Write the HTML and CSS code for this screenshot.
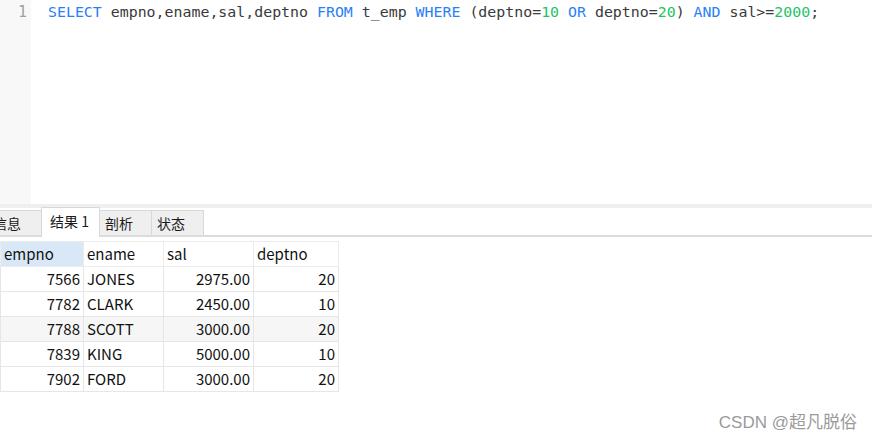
FILE: index.html
```html
<!DOCTYPE html>
<html>
<head>
<meta charset="utf-8">
<link rel="stylesheet" href="styles.css">
</head>
<body>
<div class="editor">
  <div class="gutter"><span class="ln">1</span></div>
  <div class="code"><span class="kw">SELECT</span> empno,ename,sal,deptno <span class="kw">FROM</span> t_emp <span class="kw">WHERE</span> (deptno=<span class="num">10</span> <span class="kw">OR</span> deptno=<span class="num">20</span>) <span class="kw">AND</span> sal&gt;=<span class="num">2000</span>;</div>
</div>
<div class="band"></div>
<div class="tabs">
  <div class="tab first">信息</div>
  <div class="tab active">结果 1</div>
  <div class="tab">剖析</div>
  <div class="tab">状态</div>
</div>
<div class="results">
  <table class="grid">
    <thead>
      <tr><th class="c1 sel">empno</th><th class="c2">ename</th><th class="c3">sal</th><th class="c4">deptno</th></tr>
    </thead>
    <tbody>
      <tr><td class="r">7566</td><td>JONES</td><td class="r">2975.00</td><td class="r">20</td></tr>
      <tr><td class="r">7782</td><td>CLARK</td><td class="r">2450.00</td><td class="r">10</td></tr>
      <tr class="alt"><td class="r">7788</td><td>SCOTT</td><td class="r">3000.00</td><td class="r">20</td></tr>
      <tr><td class="r">7839</td><td>KING</td><td class="r">5000.00</td><td class="r">10</td></tr>
      <tr><td class="r">7902</td><td>FORD</td><td class="r">3000.00</td><td class="r">20</td></tr>
    </tbody>
  </table>
  <div class="watermark">CSDN @超凡脱俗</div>
</div>
</body>
</html>
```
FILE: styles.css
```css
html, body {
  margin: 0;
  padding: 0;
  background: #ffffff;
  width: 872px;
  height: 443px;
  overflow: hidden;
}
.editor {
  display: flex;
  height: 204px;
  background: #ffffff;
}
.gutter {
  width: 31px;
  background: #f8f8f8;
  box-sizing: border-box;
  padding-right: 3px;
  text-align: right;
}
.ln {
  display: block;
  font-family: "DejaVu Sans Mono", monospace;
  font-size: 15px;
  line-height: 24px;
  color: #a0a0a0;
  padding-right: 1px;
}
.code {
  padding-left: 17px;
  font-family: "DejaVu Sans Mono", monospace;
  font-size: 14.9px;
  line-height: 24px;
  color: #3a3a3a;
  white-space: pre;
}
.kw { color: #2b7ff5; }
.num { color: #1cc466; }
.band {
  height: 4px;
  background: #efefef;
}
.tabs {
  display: flex;
  align-items: flex-end;
  height: 27px;
  border-bottom: 2px solid #dcdcdc;
  font-family: "Noto Sans CJK SC", "Noto Sans", sans-serif;
  font-size: 14px;
  color: #1a1a1a;
  background: #ffffff;
}
.tab {
  box-sizing: border-box;
  height: 25px;
  line-height: 24px;
  padding: 0 7px 0 6px;
  background: #efefef;
  border: 1px solid #d8d8d8;
  border-bottom: none;
  margin-left: -1px;
}
.tab.first {
  margin-left: -8px;
  width: 50px;
  padding: 0;
}
.tab.active {
  background: #ffffff;
  line-height: 27px;
  width: 59px;
  padding: 0 0 0 8px;
  margin-bottom: -2px;
  height: 30px;
  border-color: #d8d8d8;
}
.tab:nth-child(3), .tab:nth-child(4) {
  width: 53px;
  padding-left: 5px;
}
.results {
  position: relative;
  height: 206px;
  padding-top: 4px;
}
.grid {
  border-collapse: collapse;
  font-family: "Noto Sans CJK SC", "Noto Sans", sans-serif;
  font-size: 15px;
  color: #111111;
}
.grid th, .grid td {
  box-sizing: border-box;
  height: 25px;
  padding: 0 3px 0 3px;
  border: 1px solid #e6e6e6;
  font-weight: normal;
  text-align: left;
  line-height: 22px;
  white-space: nowrap;
}
.grid th { border-color: #ececec; }
.grid .c1 { width: 83px; }
.grid .c2 { width: 80px; }
.grid .c3 { width: 90px; }
.grid .c4 { width: 85px; }
.grid th.sel { background: #d9e8f7; }
.grid td.r { text-align: right; }
.grid tr.alt td { background: #f6f6f6; }
.watermark {
  position: absolute;
  right: 15px;
  bottom: 14px;
  font-family: "Liberation Sans", "Noto Sans CJK SC", sans-serif;
  font-size: 17px;
  color: #9a9a9a;
}
```
